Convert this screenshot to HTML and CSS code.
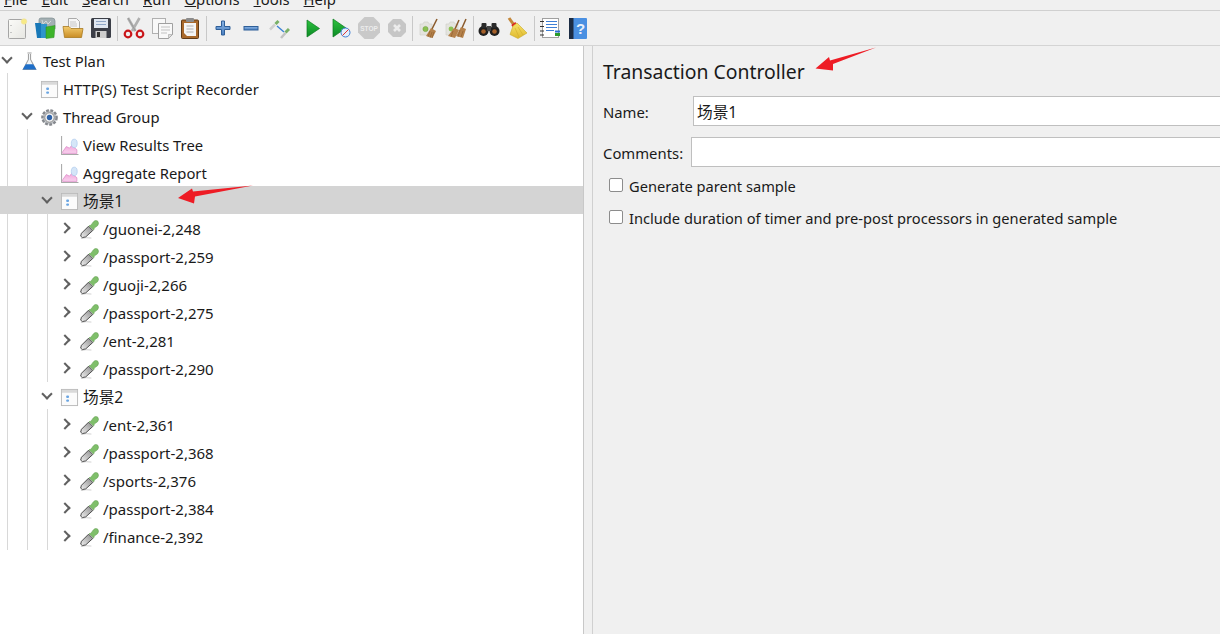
FILE: index.html
```html
<!DOCTYPE html>
<html lang="en">
<head>
<meta charset="utf-8">
<title>Transaction Controller</title>
<link rel="stylesheet" href="styles.css">
</head>
<body>
<svg class="defs" width="0" height="0" aria-hidden="true">
  <defs>
    <linearGradient id="g-folder" x1="0" y1="0" x2="0" y2="1"><stop offset="0" stop-color="#f3cb6c"/><stop offset="1" stop-color="#c98d25"/></linearGradient>
    <linearGradient id="g-page" x1="0" y1="0" x2="1" y2="1"><stop offset="0" stop-color="#fbfbf8"/><stop offset="1" stop-color="#e6e6e2"/></linearGradient>
    <linearGradient id="g-green" x1="0" y1="0" x2="0" y2="1"><stop offset="0" stop-color="#2ec23f"/><stop offset="1" stop-color="#0b8a25"/></linearGradient>
    <linearGradient id="g-blue" x1="0" y1="0" x2="0" y2="1"><stop offset="0" stop-color="#8ab4e4"/><stop offset="1" stop-color="#4a7fc0"/></linearGradient>
    <linearGradient id="g-broom" x1="0" y1="0" x2="0" y2="1"><stop offset="0" stop-color="#f6e36a"/><stop offset="1" stop-color="#e0b92e"/></linearGradient>
    <linearGradient id="g-glass" x1="0" y1="1" x2="1" y2="0"><stop offset="0" stop-color="#f0f0f0"/><stop offset="1" stop-color="#8c8c8c"/></linearGradient>
    <linearGradient id="g-pink" x1="0" y1="0" x2="0" y2="1"><stop offset="0" stop-color="#f2a8dc"/><stop offset="1" stop-color="#f9d2ee"/></linearGradient>
  </defs>
  <symbol id="i-pipe" viewBox="0 0 20 20"><path d="M1 19.500 Q6 18 12 19" stroke="#cfcfcf" fill="none"/><path d="M0.700 17 L1.500 14 L9 6.500 L13.500 11 L6 17.800 L2.500 18.500 Z" fill="url(#g-glass)" stroke="#444" stroke-width="1"/><path d="M9.500 6 L11.500 5.500 L14 2 Q16 -0.500 18.500 1 Q20.500 3.500 18.500 6 L15 8.500 L14.500 10.500 Z" fill="#7fbf6a" stroke="#639f51" stroke-width=".6"/></symbol>
  <symbol id="i-tc" viewBox="0 0 20 20"><rect x="1.500" y="1.500" width="17" height="17" fill="#fbfbfb" stroke="#b9b9b9"/><rect x="2" y="2" width="16" height="3" fill="#d9d9d9"/><rect x="6.500" y="8" width="3" height="2.500" rx="1" fill="#6aa5e2"/><rect x="6.500" y="12" width="3" height="2.500" rx="1" fill="#6aa5e2"/></symbol>
  <symbol id="i-graph" viewBox="0 0 18 18"><path d="M1.500 0v17.500h16" fill="none" stroke="#a8a8a8"/><path d="M2.500 16.500 L2.500 15 L6 10 L9 11.500 L11 9 L16 13 L16 16.500 Z" fill="url(#g-pink)" stroke="#d67fc0" stroke-width=".6"/><ellipse cx="13.500" cy="7" rx="2.800" ry="4" fill="#d5e6f8" stroke="#a5c5ea" stroke-width=".6"/></symbol>
</svg>

<header class="menubar">
  <span><u>F</u>ile</span><span><u>E</u>dit</span><span><u>S</u>earch</span><span><u>R</u>un</span><span><u>O</u>ptions</span><span><u>T</u>ools</span><span><u>H</u>elp</span>
</header>

<nav class="toolbar">
  <svg class="tool" viewBox="0 0 22 22"><rect x="2.500" y="2.500" width="17" height="19" rx="1" fill="url(#g-page)" stroke="#a5a5a5"/><circle cx="18" cy="4.500" r="2.800" fill="#f7ea86" stroke="#f0e0a0" stroke-width=".6"/><rect x="4.500" y="8" width="1" height="1" fill="#999"/><rect x="4.500" y="15" width="1" height="1" fill="#999"/></svg>
  <svg class="tool" viewBox="0 0 22 22"><path d="M5 3 Q5 1 7 1h11q3 0 3 3v8H5z" fill="#a3afb3" stroke="#7f8c90" stroke-width=".7"/><path d="M8 3l1 4 3-3 2 3 3-3" stroke="#d4dadc" fill="none"/><path d="M1 6h6v15H3z" fill="#1878b8"/><path d="M7 7h6v14H7z" fill="#2f95cc"/><path d="M12 10l9-1.500-1 12-8 1z" fill="#3db32a" stroke="#2a8f1e" stroke-width=".5"/></svg>
  <svg class="tool" viewBox="0 0 22 22"><path d="M6.500 1.500h8l3 3v8h-11z" fill="#f6f6f6" stroke="#aaa"/><path d="M8 5h6M8 7h7M8 9h7" stroke="#c6c6c6"/><path d="M1 9.500h6l2 2h12l-1.500 9H2.500z" fill="url(#g-folder)" stroke="#a87a20" stroke-width=".8"/></svg>
  <svg class="tool" viewBox="0 0 22 22"><rect x="1" y="1" width="20" height="20" rx="1.500" fill="#3b3e47"/><rect x="4" y="2" width="14" height="9" fill="#dfe6f0"/><path d="M6 4.500h10M6 7.500h10" stroke="#8fa6c6"/><rect x="5.500" y="14" width="11" height="7" fill="#cdcdcd"/><rect x="7" y="15" width="3" height="5" fill="#333"/></svg>
  <i class="sep"></i>
  <svg class="tool" viewBox="0 0 22 22"><path d="M5 1l7.500 13M16.500 1L9 14" stroke="#b0b0b0" stroke-width="2.600" fill="none"/><path d="M5 1l7.500 13" stroke="#8f8f8f" stroke-width=".7"/><circle cx="5" cy="17" r="3.300" fill="none" stroke="#c9161a" stroke-width="2.200"/><circle cx="17" cy="17" r="3.300" fill="none" stroke="#c9161a" stroke-width="2.200"/></svg>
  <svg class="tool" viewBox="0 0 22 22"><rect x="1.500" y="1.500" width="13" height="15" fill="#f8f8f8" stroke="#b0b0b0"/><path d="M7.500 6.500h14v11l-4 4h-10z" fill="#f8f8f8" stroke="#a0a0a0"/><path d="M10 10h9M10 13h9M10 16h6" stroke="#c2c2c2"/><path d="M17.500 21.500v-4h4z" fill="#ddd" stroke="#a0a0a0" stroke-width=".6"/></svg>
  <svg class="tool" viewBox="0 0 22 22"><rect x="2.500" y="3" width="17" height="18.500" rx="1" fill="#a9692b" stroke="#5f3a17"/><path d="M5 6h12v13H8l-3-3z" fill="#f5f5f5"/><rect x="7" y="1" width="8" height="4" rx="1" fill="#8c8c8c"/><path d="M7.500 9h7M7.500 12h7M7.500 15h7" stroke="#b0b0b0"/></svg>
  <i class="sep"></i>
  <svg class="tool" viewBox="0 0 22 22"><path d="M9.500 4h3v5.500H18v3h-5.500V18h-3v-5.500H4v-3h5.500z" fill="url(#g-blue)" stroke="#2f5f98"/></svg>
  <svg class="tool" viewBox="0 0 22 22"><rect x="4" y="9.500" width="14" height="3.500" fill="url(#g-blue)" stroke="#2f5f98"/></svg>
  <svg class="tool" viewBox="0 0 22 22"><path d="M2 12.500l5-5" stroke="#cfcfcf" stroke-width="2.500"/><path d="M7.500 7l3-3" stroke="#79b067" stroke-width="3"/><path d="M9 9l7 6" stroke="#3b82d6" stroke-width="1.400"/><path d="M13 21l4.500-5" stroke="#c2c2c2" stroke-width="2.500"/><path d="M17.500 15.500l3.500-3.500" stroke="#79b067" stroke-width="3"/></svg>
  <i class="sep none"></i>
  <svg class="tool" viewBox="0 0 22 22"><path d="M5 3l12.500 8.500L5 20z" fill="url(#g-green)" stroke="#0b7a20" stroke-width=".7"/></svg>
  <svg class="tool" viewBox="0 0 22 22"><path d="M3 2l13 9-13 9z" fill="url(#g-green)" stroke="#0b7a20" stroke-width=".7"/><circle cx="15.500" cy="15.500" r="4.500" fill="#e4eefb" stroke="#3d7fd6"/><path d="M12.500 18.500l6-6" stroke="#d33"/></svg>
  <svg class="tool" viewBox="0 0 22 22"><path d="M6.500 0h9L22 6.500v9L15.500 22h-9L0 15.500v-9z" fill="#c9c9c9"/><text class="stop" x="11" y="14" text-anchor="middle">STOP</text></svg>
  <svg class="tool" viewBox="0 0 22 22"><path d="M7 2h8l5 5v8l-5 5H7l-5-5V7z" fill="#c6c6c6"/><path d="M8 8l6 6M14 8l-6 6" stroke="#ececec" stroke-width="2.600"/></svg>
  <i class="sep s2"></i>
  <svg class="tool" viewBox="0 0 22 22"><path d="M3 7h3l1-2h4l1 2h3v11H3z" fill="#e4e4de" stroke="#cfcfc8" stroke-width=".6"/><circle cx="8.500" cy="12" r="2.600" fill="#8cc152" stroke="#6a9a3a" stroke-width=".5"/><path d="M20 2l-5 10" stroke="#8a5a2b" stroke-width="1.500"/><path d="M14 11l5 3-3.500 7-6.500-2z" fill="#b5814a"/><path d="M13 14l-2 6M15 15l-2 6M17 15l-2 6" stroke="#8a5a2b" stroke-width=".6"/></svg>
  <svg class="tool" viewBox="0 0 22 22"><path d="M1 7h3l1-2h4l1 2h3v11H1z" fill="#e4e4de" stroke="#cfcfc8" stroke-width=".6"/><circle cx="6" cy="12" r="2.400" fill="#8cc152"/><path d="M21 2l-4 9M14 3l-4 9" stroke="#8a5a2b" stroke-width="1.500"/><path d="M9 11l5 2-4 8-7-2z" fill="#b5814a"/><path d="M16 10l5 2-3 9-7-2z" fill="#b5814a"/><path d="M8 14l-2 6M15 13l-2 7M18 14l-2 6" stroke="#8a5a2b" stroke-width=".6"/></svg>
  <i class="sep s3"></i>
  <svg class="tool" viewBox="0 0 22 22"><circle cx="5.500" cy="14" r="5" fill="#1f1f1f"/><circle cx="16.500" cy="14" r="5" fill="#1f1f1f"/><circle cx="5.500" cy="14.500" r="2.300" fill="#a5602a"/><circle cx="16.500" cy="14.500" r="2.300" fill="#a5602a"/><rect x="3.500" y="6" width="5" height="5" rx="1" fill="#2a2a2a"/><rect x="13.500" y="6" width="5" height="5" rx="1" fill="#2a2a2a"/><rect x="9" y="9" width="4" height="5" fill="#444"/></svg>
  <svg class="tool" viewBox="0 0 22 22"><path d="M3 1l5 7" stroke="#c4873a" stroke-width="3"/><path d="M6 9l4-3" stroke="#d22" stroke-width="2.200"/><path d="M7 9l4-3 10 10-9 5.500-8-4z" fill="url(#g-broom)" stroke="#c7a92a" stroke-width=".6"/><path d="M9 11l4 9M12 10l5 8" stroke="#d1ac2b" stroke-width=".6"/></svg>
  <i class="sep s3"></i>
  <svg class="tool" viewBox="0 0 22 22"><rect x="3.500" y="1.500" width="16" height="19" fill="#fff" stroke="#a0a0a0"/><path d="M1 4.500h4M1 9.500h4M1 14h4M1 18h4" stroke="#333"/><path d="M7 4.500h11M7 7.500h11M7 10.500h11M7 13.500h8" stroke="#3d7fd6"/><path d="M16 17.500h5" stroke="#2a9a2a" stroke-width="3"/><path d="M16 14.500h5" stroke="#2a6fd0" stroke-width="2"/></svg>
  <svg class="tool" viewBox="0 0 22 22"><rect x="2" y="1" width="18" height="21" rx="1" fill="#4a90e2"/><rect x="2" y="1" width="4.500" height="21" fill="#1c2c44"/><text class="help" x="13.500" y="17" text-anchor="middle">?</text></svg>
</nav>

<main class="split">
  <section class="tree">
    <div class="row"><span class="tw open"></span><svg class="ic" viewBox="0 0 18 18"><path d="M7 1h4M8 2v5L3 16.500h12L10 7V2" fill="#f2f5f7" stroke="#a0a0a0"/><path d="M5.500 11.500h7l3 5H2.500z" fill="#1f6fc8"/></svg><span class="t">Test Plan</span></div>
    <div class="kids">
      <div class="row"><span class="tw"></span><svg class="ic"><use href="#i-tc"/></svg><span class="t">HTTP(S) Test Script Recorder</span></div>
      <div class="row"><span class="tw open"></span><svg class="ic" viewBox="0 0 20 20"><circle cx="10" cy="10" r="7.500" fill="#c5c8cc" stroke="#85888d" stroke-width="2.500" stroke-dasharray="3 1.500"/><circle cx="10" cy="10" r="5" fill="#f2f2f2" stroke="#888"/><circle cx="10" cy="10" r="2.800" fill="#2e62a8"/></svg><span class="t">Thread Group</span></div>
      <div class="kids">
        <div class="row"><span class="tw"></span><svg class="ic"><use href="#i-graph"/></svg><span class="t">View Results Tree</span></div>
        <div class="row"><span class="tw"></span><svg class="ic"><use href="#i-graph"/></svg><span class="t">Aggregate Report</span></div>
        <div class="row selected"><span class="tw open"></span><svg class="ic"><use href="#i-tc"/></svg><span class="t cjk">场景1</span></div>
        <div class="kids">
          <div class="row"><span class="tw shut"></span><svg class="ic"><use href="#i-pipe"/></svg><span class="t path">/guonei-2,248</span></div>
          <div class="row"><span class="tw shut"></span><svg class="ic"><use href="#i-pipe"/></svg><span class="t path">/passport-2,259</span></div>
          <div class="row"><span class="tw shut"></span><svg class="ic"><use href="#i-pipe"/></svg><span class="t path">/guoji-2,266</span></div>
          <div class="row"><span class="tw shut"></span><svg class="ic"><use href="#i-pipe"/></svg><span class="t path">/passport-2,275</span></div>
          <div class="row"><span class="tw shut"></span><svg class="ic"><use href="#i-pipe"/></svg><span class="t path">/ent-2,281</span></div>
          <div class="row"><span class="tw shut"></span><svg class="ic"><use href="#i-pipe"/></svg><span class="t path">/passport-2,290</span></div>
        </div>
        <div class="row"><span class="tw open"></span><svg class="ic"><use href="#i-tc"/></svg><span class="t cjk">场景2</span></div>
        <div class="kids">
          <div class="row"><span class="tw shut"></span><svg class="ic"><use href="#i-pipe"/></svg><span class="t path">/ent-2,361</span></div>
          <div class="row"><span class="tw shut"></span><svg class="ic"><use href="#i-pipe"/></svg><span class="t path">/passport-2,368</span></div>
          <div class="row"><span class="tw shut"></span><svg class="ic"><use href="#i-pipe"/></svg><span class="t path">/sports-2,376</span></div>
          <div class="row"><span class="tw shut"></span><svg class="ic"><use href="#i-pipe"/></svg><span class="t path">/passport-2,384</span></div>
          <div class="row"><span class="tw shut"></span><svg class="ic"><use href="#i-pipe"/></svg><span class="t path">/finance-2,392</span></div>
        </div>
      </div>
    </div>
  </section>

  <section class="pane">
    <h1 class="title">Transaction Controller</h1>
    <label class="field name"><span class="lbl">Name:</span><span class="input cjk">场景1</span></label>
    <label class="field comments"><span class="lbl">Comments:</span><span class="input"></span></label>
    <label class="check first"><i class="box"></i><span class="t">Generate parent sample</span></label>
    <label class="check"><i class="box"></i><span class="t">Include duration of timer and pre-post processors in generated sample</span></label>
  </section>
</main>

<svg class="arrow a1" width="62" height="24" viewBox="0 0 62 24"><path d="M0.500 21.500 L14 10 L15 13.500 L61 0.500 L18 17 L18 23.500 Z" fill="#ee1c25"/></svg>
<svg class="arrow a2" width="76" height="20" viewBox="0 0 76 20"><path d="M0 13 L14 3.500 L15 6.500 L75 0.500 L17 11.500 L16 18.500 Z" fill="#ee1c25"/></svg>
</body>
</html>
```
FILE: styles.css
```css
* { box-sizing: border-box; }
html, body { margin: 0; height: 100%; overflow: hidden; }
body {
  width: 1220px; height: 634px; position: relative;
  background: #f0f0f0; color: #1a1a1a;
  font: 14.8px/28px "Noto Sans", "Noto Sans CJK SC", sans-serif;
  display: flex; flex-direction: column;
}
.defs { position: absolute; }
.menubar {
  height: 11px; flex: none; display: flex; gap: 14px; padding: 0 0 4px 4px;
  background: #f0f0f0; border-bottom: 1px solid #d0d0d0; overflow: hidden;
  line-height: 14px; align-items: flex-end; font-size: 14.800px;
}
.menubar span { display: block; flex: none; }
.toolbar {
  height: 34px; flex: none; display: flex; align-items: center;
  gap: 6px; padding: 0 0 0 6px; background: #f0f0f0;
}
.tool { width: 22px; height: 22px; flex: none; }
.stop { font: bold 6.500px "Liberation Sans", sans-serif; fill: #ececec; }
.help { font: bold 15px "Liberation Sans", sans-serif; fill: #e8f0fb; }
.sep { width: 1px; height: 25px; background: #c8c8c8; flex: none; margin: 0 -1px; }
.sep.none { width: 0; background: none; margin: 0; }
.sep.s2 { margin: 0 -2px; }
.sep.s3 { margin: 0 -2px 0 0; }
.split {
  flex: 1; display: flex; min-height: 0;
  border-top: 1px solid #d4d4d4;
}
.tree { width: 584px; flex: none; background: #fff; border-right: 1px solid #c8c8c8; overflow: hidden; }
.row { height: 28px; display: flex; align-items: center; white-space: nowrap; position: relative; }
.row.selected { background: #d4d4d4; margin-left: -40px; padding-left: 40px; width: 583px; }
.t { padding-top: 2px; }
.path { font-size: 15px; }
.cjk { font-size: 15.700px; }
.tw { width: 12px; height: 12px; margin-left: 2px; margin-right: 6px; flex: none; position: relative; }
.tw.open::before {
  content: ""; position: absolute; left: 1px; top: 0;
  width: 6px; height: 6px; border: solid #606060; border-width: 0 2px 2px 0; transform: rotate(45deg);
}
.tw.shut::before {
  content: ""; position: absolute; left: -1px; top: 2px;
  width: 6px; height: 6px; border: solid #606060; border-width: 2px 2px 0 0; transform: rotate(45deg);
}
.ic { width: 19px; height: 19px; flex: none; margin: 2px 4px 0 0; }
.kids { margin-left: 20px; position: relative; }
.kids::before { content: ""; position: absolute; left: -13px; top: -1px; bottom: 0; width: 1px; background: #d8d8d8; }
.pane { flex: 1; margin-left: 8px; border-left: 1px solid #d0d0d0; padding: 0 0 0 10px; overflow: hidden; min-width: 0; }
.title { margin: 11px 0 0; font-size: 19.400px; font-weight: 400; line-height: 30px; }
.field { display: flex; align-items: center; height: 30px; }
.name { margin-top: 9px; }
.comments { margin-top: 11px; }
.lbl { flex: none; width: 90px; padding-top: 2px; font-size: 14.850px; }
.comments .lbl { width: 88px; }
.input { flex: 1; height: 30px; background: #fff; border: 1px solid #bfbfbf; margin-right: -2px; padding: 1px 0 0 3px; line-height: 28px; }
.check { display: flex; align-items: center; height: 20px; padding-left: 6px; font-size: 14.650px; }
.check.first { margin-top: 8px; }
.check + .check { margin-top: 12px; }
.box { width: 14px; height: 14px; background: #fff; border: 1px solid #8c8c8c; border-radius: 2px; margin-right: 6px; flex: none; }
.arrow { position: absolute; }
.a1 { left: 815px; top: 47px; }
.a2 { left: 178px; top: 185px; }
```
